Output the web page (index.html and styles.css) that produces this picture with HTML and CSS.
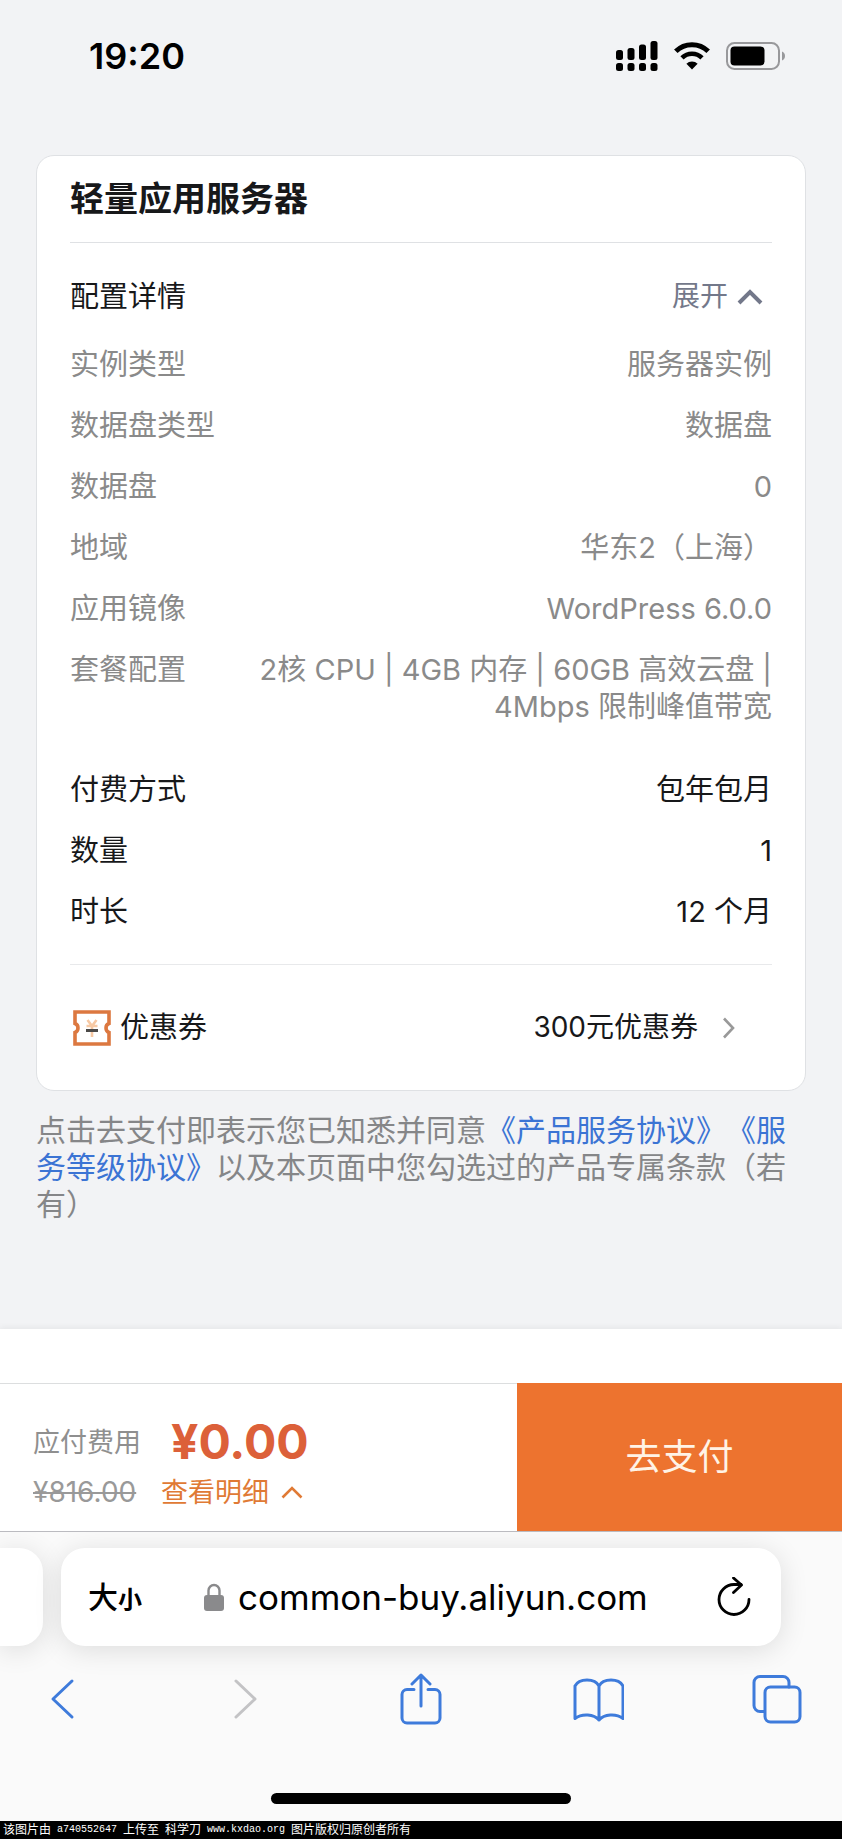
FILE: index.html
```html
<!DOCTYPE html>
<html lang="zh-CN">
<head>
    <meta charset="UTF-8">
    <meta name="viewport" content="width=device-width, initial-scale=1.0">
    <title>轻量应用服务器</title>
    <link rel="stylesheet" href="styles.css">
</head>
<body>
    <header class="status-bar">
        <span class="time">19:20</span>
        <div class="status-icons">
            <svg width="42" height="30" viewBox="0 0 42 30">
                <rect x="0" y="9" width="7" height="10" rx="2.5"/>
                <rect x="11.5" y="7" width="7" height="12" rx="2.5"/>
                <rect x="23" y="3.5" width="7" height="15.5" rx="2.5"/>
                <rect x="34.5" y="0" width="7" height="19" rx="2.5"/>
                <rect x="0" y="22" width="7" height="8" rx="2.5"/>
                <rect x="11.5" y="22" width="7" height="8" rx="2.5"/>
                <rect x="23" y="22" width="7" height="8" rx="2.5"/>
                <rect x="34.5" y="22" width="7" height="8" rx="2.5"/>
            </svg>
            <svg width="36" height="28" viewBox="0 0 36 28">
                <path d="M1.8 9.3a23 23 0 0 1 32.4 0" fill="none" stroke="#000" stroke-width="5"/>
                <path d="M8 15.9a14.2 14.2 0 0 1 20 0" fill="none" stroke="#000" stroke-width="4.6"/>
                <path d="M18 27.5l-5.6-5.7a8 8 0 0 1 11.2 0z"/>
            </svg>
            <svg width="60" height="28" viewBox="0 0 60 28">
                <rect x="1" y="1" width="52" height="26" rx="7.5" fill="none" stroke="#98989b" stroke-width="2"/>
                <rect x="4.5" y="4.5" width="34" height="19" rx="4"/>
                <path d="M56 9.5c4 1.5 4 7.5 0 9z" fill="#98989b"/>
            </svg>
        </div>
    </header>

    <main>
        <section class="card">
            <h1>轻量应用服务器</h1>
            <div class="details">
                <div class="details-head">
                    <h2>配置详情</h2>
                    <button class="toggle" type="button">展开
                        <svg width="26" height="16" viewBox="0 0 26 16"><path d="M2 14L13 3l11 11" fill="none" stroke="#73788a" stroke-width="4"/></svg>
                    </button>
                </div>
                <dl class="rows muted">
                    <div class="row"><dt>实例类型</dt><dd>服务器实例</dd></div>
                    <div class="row"><dt>数据盘类型</dt><dd>数据盘</dd></div>
                    <div class="row"><dt>数据盘</dt><dd>0</dd></div>
                    <div class="row"><dt>地域</dt><dd>华东2（上海）</dd></div>
                    <div class="row"><dt>应用镜像</dt><dd>WordPress 6.0.0</dd></div>
                    <div class="row"><dt>套餐配置</dt><dd>2核 CPU | 4GB 内存 | 60GB 高效云盘 |<br>4Mbps 限制峰值带宽</dd></div>
                </dl>
                <dl class="rows">
                    <div class="row"><dt>付费方式</dt><dd>包年包月</dd></div>
                    <div class="row"><dt>数量</dt><dd>1</dd></div>
                    <div class="row"><dt>时长</dt><dd>12 个月</dd></div>
                </dl>
            </div>
            <button class="coupon" type="button">
                <svg width="40" height="36" viewBox="0 0 40 36">
                    <path d="M3 2h34v11.5c-4 1.5-4 7.5 0 9V34H3V22.5c4-1.5 4-7.5 0-9z" fill="none" stroke="#dc7840" stroke-width="3.6"/>
                    <path d="M15.5 10l4.5 6 4.5-6M20 16v11M14.5 16h11" fill="none" stroke="#f7c9a4" stroke-width="2.6"/>
                    <path d="M14 20.5h12" stroke="#4c4a48" stroke-width="3"/>
                </svg>
                <span class="coupon-label">优惠券</span>
                <span class="coupon-value">300元优惠券</span>
                <svg width="14" height="22" viewBox="0 0 14 22"><path d="M2 1.5l9 9.5-9 9.5" fill="none" stroke="#999" stroke-width="2.6"/></svg>
            </button>
        </section>

        <p class="agreement">点击去支付即表示您已知悉并同意<a href="#">《产品服务协议》</a><a href="#">《服务等级协议》</a>以及本页面中您勾选过的产品专属条款（若有）</p>
    </main>

    <footer class="pay-bar">
        <div class="price">
            <div class="price-line">
                <span class="price-label">应付费用</span>
                <strong>¥0.00</strong>
            </div>
            <div class="price-line">
                <del>¥816.00</del>
                <button class="price-detail" type="button">查看明细
                    <svg width="22" height="13" viewBox="0 0 22 13"><path d="M1.5 11.5L11 2l9.5 9.5" fill="none" stroke="#e07a35" stroke-width="2.6"/></svg>
                </button>
            </div>
        </div>
        <button class="pay" type="button">去支付</button>
    </footer>

    <nav class="browser">
        <div class="tabs">
            <div class="tab-prev"></div>
            <div class="address">
                <button class="text-size" type="button" aria-label="大小"><span>大</span><small>小</small></button>
                <svg width="20" height="28" viewBox="0 0 20 28">
                    <path d="M4.5 13V7.5a5.5 5.5 0 0 1 11 0V13" fill="none" stroke="#8a8a8c" stroke-width="2.4"/>
                    <rect x="0" y="12" width="20" height="16" rx="3" fill="#8a8a8c"/>
                </svg>
                <input type="text" value="common-buy.aliyun.com" aria-label="地址">
                <button type="button" aria-label="重新载入">
                    <svg width="34" height="40" viewBox="0 0 34 40" fill="none" stroke="#000" stroke-width="2.8" stroke-linecap="round" stroke-linejoin="round">
                        <path d="M32 22.500A15 15 0 1 1 17 7.500h7"/>
                        <path d="M16.500 1l8 7-8 7.500"/>
                    </svg>
                </button>
            </div>
        </div>
        <div class="toolbar">
            <button type="button" aria-label="后退">
                <svg width="50" height="52" viewBox="0 0 50 52"><path d="M35 8L16 26l19 18"/></svg>
            </button>
            <button type="button" aria-label="前进" disabled>
                <svg width="50" height="52" viewBox="0 0 50 52"><path d="M21 8l19 18-19 18"/></svg>
            </button>
            <button type="button" aria-label="分享">
                <svg width="50" height="52" viewBox="0 0 50 52">
                    <path d="M20 16.5h-7a5 5 0 0 0-5 5V45a5 5 0 0 0 5 5h28a5 5 0 0 0 5-5V21.5a5 5 0 0 0-5-5h-7"/>
                    <path d="M27 33V2M18 11l9-9 9 9"/>
                </svg>
            </button>
            <button type="button" aria-label="书签">
                <svg width="52" height="52" viewBox="0 0 52 52">
                    <path d="M27 47c-5-6-17-7-24-1.500V13c4-8 20-8 24 0 4-8 20-8 24 0v32.500C44 40 32 41 27 47zM27 13v34"/>
                </svg>
            </button>
            <button type="button" aria-label="标签页">
                <svg width="50" height="52" viewBox="0 0 50 52">
                    <path d="M12.5 38.5H8a6 6 0 0 1-6-6V9.5a6 6 0 0 1 6-6h23a6 6 0 0 1 6 6V14"/>
                    <rect x="13" y="14" width="35" height="35" rx="5.5"/>
                </svg>
            </button>
        </div>
        <div class="home-indicator"></div>
    </nav>

    <div class="credit">
        <span>该图片由</span>
        <span class="latin">a740552647</span>
        <span>上传至</span>
        <span>科学刀</span>
        <span class="latin">www.kxdao.org</span>
        <span>图片版权归原创者所有</span>
    </div>
</body>
</html>
```
FILE: styles.css
```css
* {
    margin: 0;
    padding: 0;
    box-sizing: border-box;
}

body {
    background: #f2f3f5;
    color: #17181a;
    font-family: Inter, "Noto Sans CJK SC", sans-serif;
    font-size: 29px;
    line-height: 37px;
    text-spacing-trim: space-all;
}

button,
input {
    border: none;
    background: none;
    color: inherit;
    font: inherit;
}

button {
    cursor: pointer;
}

svg {
    display: block;
    flex-shrink: 0;
}

/* Phone status bar */
.status-bar {
    display: flex;
    justify-content: space-between;
    align-items: center;
    height: 112px;
    padding: 0 56px 0 89px;
    color: #000;
}

.time {
    font-size: 36px;
    font-weight: 600;
}

.status-icons {
    display: flex;
    align-items: center;
    gap: 16px;
}

/* Order card */
main {
    padding: 43px 36px 106px;
}

.card {
    padding: 0 33px;
    background: #fff;
    border: 1px solid #dfe1e4;
    border-radius: 18px;
}

h1 {
    padding: 19px 0;
    border-bottom: 1px solid #dfe1e4;
    font-size: 34px;
    font-weight: 700;
    line-height: 48px;
}

h2 {
    font-size: 29px;
    font-weight: 400;
}

.details {
    padding: 35px 0 34px;
    border-bottom: 1px solid #e8e9eb;
}

.details-head {
    display: flex;
    justify-content: space-between;
    align-items: center;
    margin-bottom: 31px;
}

.toggle {
    display: flex;
    align-items: center;
    gap: 9px;
    padding-right: 9px;
    color: #73788a;
    font-size: 28px;
}

.rows {
    display: flex;
    flex-direction: column;
    gap: 24px;
}

.rows + .rows {
    margin-top: 46px;
}

.row {
    display: flex;
    justify-content: space-between;
}

.row dd {
    text-align: right;
}

.muted {
    color: #8a8a8a;
}

.coupon {
    display: flex;
    align-items: center;
    width: 100%;
    height: 125px;
    padding: 0 36px 0 2px;
    text-align: left;
}

.coupon-label {
    flex: 1;
    padding-left: 8px;
}

.coupon-value {
    margin-right: 24px;
    font-size: 28px;
}

.agreement {
    margin-top: 21px;
    color: #858688;
    font-size: 30px;
}

.agreement a {
    color: #3b74d4;
    text-decoration: none;
}

/* Pay bar */
.pay-bar {
    display: flex;
    padding-top: 54px;
    background: #fff;
    border-bottom: 1px solid #bbbbc0;
    box-shadow: 0 -2px 6px rgba(0, 0, 0, 0.05);
}

.price {
    display: flex;
    flex: 1;
    flex-direction: column;
    justify-content: center;
    gap: 4px;
    height: 148px;
    padding: 10px 0 0 33px;
    border-top: 1px solid #dcdedf;
}

.price-line {
    display: flex;
    align-items: center;
}

.price-label {
    width: 138px;
    color: #8f8f8f;
    font-size: 27px;
}

.price strong {
    color: #dc6039;
    font-size: 48px;
    font-weight: 700;
    line-height: 56px;
}

.price del {
    width: 128px;
    color: #999;
    font-size: 28px;
}

.price-detail {
    display: flex;
    align-items: center;
    gap: 12px;
    color: #e07a35;
    font-size: 27px;
}

.pay {
    width: 38.6%;
    background: #ed732f;
    color: #fff3e6;
    font-size: 36px;
}

/* Browser controls */
.browser {
    padding: 16px 0 17px;
    background: #fafafa;
    overflow: hidden;
}

.tabs {
    display: flex;
    gap: 18px;
    padding-right: 61px;
}

.tab-prev,
.address {
    height: 98px;
    background: #fff;
    box-shadow: 0 4px 28px rgba(0, 0, 0, 0.12);
}

.tab-prev {
    width: 43px;
    border-radius: 0 24px 24px 0;
}

.address {
    display: flex;
    flex: 1;
    align-items: center;
    min-width: 0;
    padding: 0 30px 0 27px;
    border-radius: 24px;
    color: #000;
}

.address input {
    flex: 1;
    min-width: 0;
    padding-left: 14px;
    font-size: 35px;
    line-height: 44px;
}

.text-size {
    display: flex;
    align-items: baseline;
    margin-right: 62px;
    padding-top: 3px;
    font-size: 30px;
    font-weight: 500;
}

.text-size small {
    font-size: 24px;
    font-weight: 700;
}

.toolbar {
    display: flex;
    justify-content: space-between;
    padding: 27px 40px 0 37px;
}

.toolbar svg {
    fill: none;
    stroke: #3e7bdb;
    stroke-width: 3;
    stroke-linecap: round;
    stroke-linejoin: round;
}

.toolbar button:disabled svg {
    stroke: #c3c3c5;
}

.home-indicator {
    width: 300px;
    height: 11px;
    margin: 68px auto 0;
    background: #000;
    border-radius: 6px;
}

/* Credit strip */
.credit {
    display: flex;
    align-items: center;
    gap: 6px;
    padding-left: 3px;
    background: #000;
    color: #fff;
    font-size: 12px;
    line-height: 18px;
}

.credit .latin {
    font-family: "Liberation Mono", monospace;
    font-size: 10px;
}
```
